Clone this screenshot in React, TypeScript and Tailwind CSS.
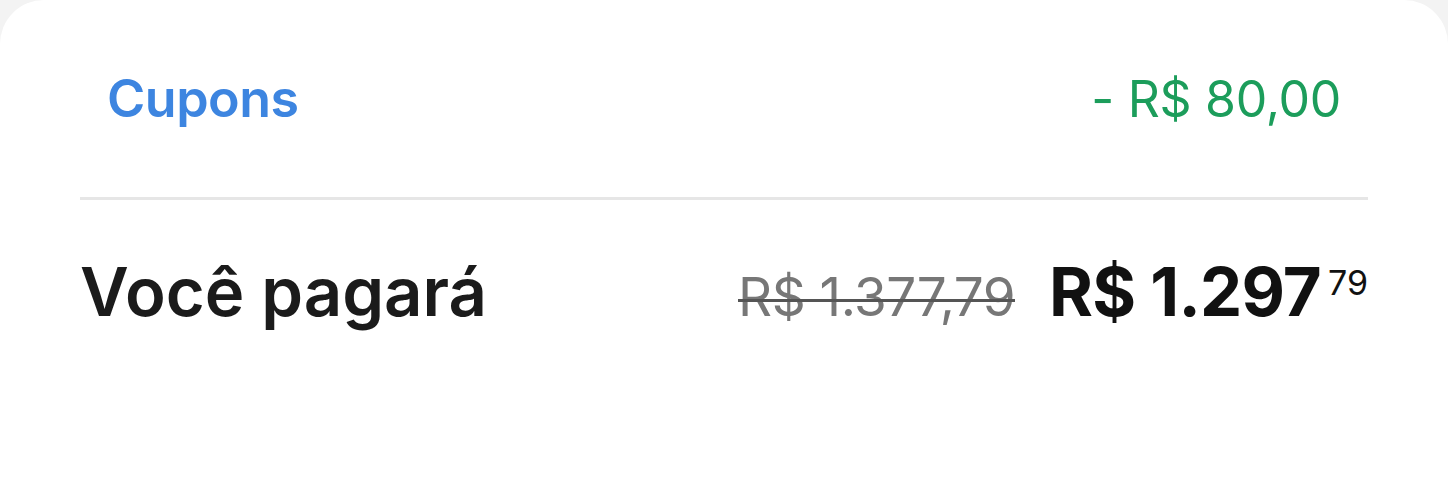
export default function App() {
  return (
    <div className="min-h-[500px] w-full bg-[#f3f3f3] font-['Inter',sans-serif]">
      <div className="h-[500px] rounded-t-[44px] bg-white px-[80px]">
        {/* coupon line */}
        <div className="flex h-[197px] items-center justify-between px-[27px]">
          <span className="text-[52px] font-semibold leading-none tracking-[-0.5px] text-[#3d85e0]">Cupons</span>
          <span className="text-[50px] leading-none tracking-[-0.3px] text-[#1c9d5b]">- R$ 80,00</span>
        </div>

        <div className="h-[3px] bg-[#e6e6e6]" />

        {/* total line */}
        <div className="flex items-baseline justify-between pt-[58px]">
          <span className="text-[67px] font-semibold leading-none text-[#1b1b1b]">Você pagará</span>
          <div className="flex items-baseline">
            <span className="relative text-[53px] leading-none tracking-[-0.5px] text-[#777777]">
              R$ 1.377,79
              <span className="absolute left-0 right-0 top-[53%] h-[3px] bg-[#555555]" />
            </span>
            <span className="ml-[34px] text-[67px] font-bold leading-none tracking-[-0.8px] text-[#111111]">
              R$ 1.297
            </span>
            <span className="ml-[7px] self-start pt-[8px] text-[34px] leading-none text-[#111111]">79</span>
          </div>
        </div>
      </div>
    </div>
  );
}
